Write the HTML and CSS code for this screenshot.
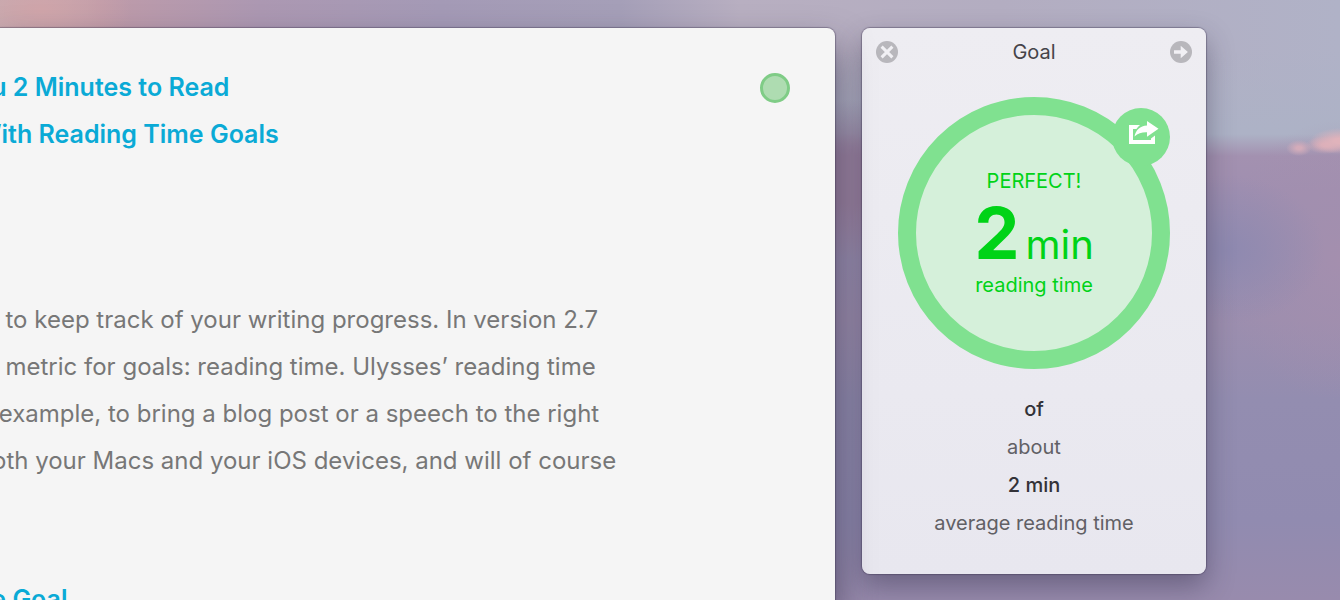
FILE: index.html
```html
<!DOCTYPE html>
<html lang="en">
<head>
    <meta charset="UTF-8">
    <meta name="viewport" content="width=device-width, initial-scale=1.0">
    <title>Reading Time Goal</title>
    <link rel="stylesheet" href="styles.css">
</head>
<body>
    <div class="desktop">
        <main class="editor">
            <article class="sheet">
                <h1>ou 2 Minutes to Read</h1>
                <h1>With Reading Time Goals</h1>
                <p>
                    &nbsp;&nbsp;to keep track of your writing progress. In version 2.7<br>
                    &nbsp;&nbsp;metric for goals: reading time. Ulysses’ reading time<br>
                    &nbsp;example, to bring a blog post or a speech to the right<br>
                    oth your Macs and your iOS devices, and will of course
                </p>
                <h2>he Goal</h2>
            </article>
            <button class="goal-dot" aria-label="Show goal"></button>
        </main>

        <aside class="goal">
            <header class="goal-header">
                <button class="icon-button" aria-label="Close">
                    <svg width="22" height="22" viewBox="0 0 22 22">
                        <circle cx="11" cy="11" r="11" fill="#b8b7bc"/>
                        <path d="M5.600 5.600l10.800 10.800M16.400 5.600l-10.800 10.800" stroke="#f1f0f4" stroke-width="3"/>
                    </svg>
                </button>
                <h2>Goal</h2>
                <button class="icon-button" aria-label="Detach">
                    <svg width="22" height="22" viewBox="0 0 22 22">
                        <circle cx="11" cy="11" r="11" fill="#b8b7bc"/>
                        <path d="M4 9.200h6.700V4.800l7.200 6.200-7.200 6.200v-4.400H4z" fill="#f1f0f4"/>
                    </svg>
                </button>
            </header>

            <div class="ring">
                <span class="status">PERFECT!</span>
                <div class="amount"><strong>2</strong><span>min</span></div>
                <span class="unit">reading time</span>
                <button class="share" aria-label="Share">
                    <svg width="30" height="24" viewBox="0 0 30 24">
                        <path d="M11 4H0v19h26v-8.500l-4 3v1.500H4V8h3.400C8.600 6.200 9.800 5 11 4z" fill="#fff"/>
                        <path d="M18 0l11.500 7.800L18 15.800v-4.600c-5-.2-9 1-12.500 4.300C6.700 9 11 4.900 18 4.400z" fill="#fff"/>
                    </svg>
                </button>
            </div>

            <div class="target">
                <span class="value">of</span>
                <span>about</span>
                <span class="value">2 min</span>
                <span>average reading time</span>
            </div>
        </aside>
    </div>
</body>
</html>
```

FILE: styles.css
```css
* {
    box-sizing: border-box;
}

body {
    margin: 0;
    font-family: Inter, "Liberation Sans", sans-serif;
}

h1, h2, p {
    margin: 0;
}

button {
    padding: 0;
    border: none;
    background: none;
    cursor: pointer;
}

svg {
    display: block;
}

/* Evening sky behind the windows */
.desktop {
    display: flex;
    align-items: flex-start;
    gap: 27px;
    height: 100vh;
    padding: 28px 134px 0 0;
    overflow: hidden;
    background:
        radial-gradient(ellipse 30px 13px at 1340px 141px, #e0b3bb 20%, transparent),
        radial-gradient(ellipse 20px 9px at 1326px 145px, #d9adb8 20%, transparent),
        radial-gradient(ellipse 13px 8px at 1299px 148px, #d3acba 20%, transparent),
        radial-gradient(ellipse 90px 50px at 40px 10px, #d0a5aa, transparent),
        radial-gradient(ellipse 90px 80px at 850px 180px, #9c84a2 30%, transparent),
        radial-gradient(ellipse 100px 75px at 1225px 250px, #8e89b0, transparent),
        radial-gradient(ellipse 120px 140px at 1340px 260px, #a48fae, transparent),
        linear-gradient(transparent 134px, #a391b0 156px, #a08fb0 190px, #9a8fb0 260px, #9c8eae 320px, #938db0 400px, #918bb0 520px, #988bad 600px),
        linear-gradient(transparent 50px, #adb2c6 130px),
        linear-gradient(to right, #c4adb2, #bf9ba9 100px, #ac98b2 260px, #a49ab6 440px, #a59fb8 620px, #b8afc1 740px, #b3adc1 1000px, #b0b2c7 1340px);
}

.editor {
    position: relative;
    flex: 1;
    align-self: stretch;
    overflow: hidden;
    border-radius: 0 8px 0 0;
    background-color: #f5f5f5;
    box-shadow: 0 0 1px 1px rgba(60, 50, 80, 0.4), 0 20px 36px rgba(40, 35, 60, 0.6);
}

.sheet {
    padding-top: 36px;
    color: #777;
    font-size: 24px;
    line-height: 47px;
    white-space: nowrap;
}

.sheet h1,
.sheet h2 {
    margin-left: -24px;
    color: #0aaad6;
    font-size: 25px;
    font-weight: 600;
}

.sheet p {
    margin: 138px 0 92px -8px;
}

.goal-dot {
    position: absolute;
    top: 45px;
    right: 45px;
    width: 30px;
    height: 30px;
    border: 3px solid #7fcc86;
    border-radius: 50%;
    background-color: #aedcb1;
}

.goal {
    width: 344px;
    height: 546px;
    border-radius: 8px;
    background: linear-gradient(#eeedf2, #e8e7ef);
    box-shadow: 0 0 1px 1px rgba(60, 50, 80, 0.4), 0 12px 28px rgba(40, 35, 60, 0.4);
}

.goal-header {
    display: flex;
    align-items: center;
    justify-content: space-between;
    height: 48px;
    padding: 0 14px;
}

.goal-header h2 {
    color: #454449;
    font-size: 20px;
    font-weight: 400;
}

.ring {
    position: relative;
    display: flex;
    flex-direction: column;
    align-items: center;
    width: 272px;
    height: 272px;
    margin: 21px auto 0;
    padding-top: 54px;
    border: 18px solid #80e190;
    border-radius: 50%;
    background-color: #d5f0da;
    color: #00d317;
    font-size: 20px;
    line-height: 24px;
}

.amount {
    display: flex;
    align-items: baseline;
    gap: 6px;
    height: 80px;
    line-height: 80px;
}

.amount strong {
    font-size: 72px;
    font-weight: 700;
}

.amount span {
    font-size: 40px;
}

.share {
    position: absolute;
    top: -7px;
    right: -18px;
    display: flex;
    align-items: center;
    justify-content: center;
    width: 58px;
    height: 58px;
    padding: 0 0 8px 6px;
    border-radius: 50%;
    background-color: #80e190;
}

.target {
    display: flex;
    flex-direction: column;
    align-items: center;
    margin-top: 21px;
    color: #616065;
    font-size: 20px;
    line-height: 38px;
}

.target .value {
    color: #333238;
    font-weight: 500;
}
```
